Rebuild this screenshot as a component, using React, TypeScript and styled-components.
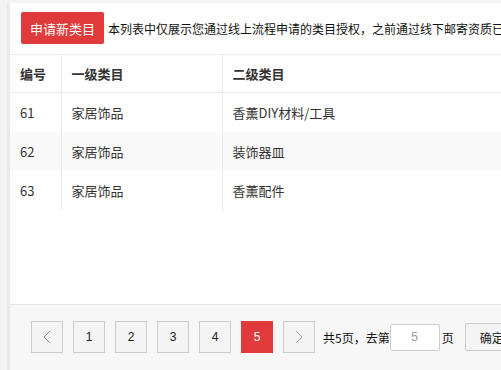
import React from 'react'
import styled, { createGlobalStyle } from 'styled-components';

const GlobalStyle = createGlobalStyle`
    html, body {
        margin: 0;
        padding: 0;
        overflow: hidden;
        background: #f3f3f3;
    }
    body {
        font-family: "Noto Sans CJK SC", "Noto Sans", sans-serif;
        color: #333;
    }
`;

const Page = styled.div`
    height: 370px;
    padding: 3px 0 0 7px;
    box-sizing: border-box;
`;

const Panel = styled.div`
    width: 760px;
    height: 100%;
    background: #fff;
    border-left: 3px solid #e9e9e9;
    display: flex;
    flex-direction: column;
`;

const Toolbar = styled.div`
    display: flex;
    align-items: center;
    gap: 4px;
    padding: 9px 11px 10px;
    border-bottom: 1px solid #ebebeb;
    white-space: nowrap;
`;

const PrimaryButton = styled.button`
    height: 32px;
    padding: 0 9px;
    border: none;
    border-radius: 2px;
    background: #e03a3a;
    color: #fff;
    font-family: inherit;
    font-size: 13px;
    cursor: pointer;
`;

const Notice = styled.span`
    font-size: 12px;
    color: #111;
`;

const Table = styled.table`
    border-collapse: collapse;
    table-layout: fixed;
    width: 750px;
    font-size: 13px;
`;

const Col = styled.col<{ $w?: number }>`
    width: ${({ $w }) => ($w ? `${$w}px` : 'auto')};
`;

const HeadCell = styled.th`
    height: 37px;
    padding: 0 10px;
    text-align: left;
    font-weight: 600;
    font-size: 13px;
    color: #333;
    border-bottom: 1px solid #ebebeb;
    border-right: 1px solid #ebebeb;
`;

const Row = styled.tr<{ $striped?: boolean }>`
    background: ${({ $striped }) => ($striped ? '#f9f9f9' : '#fff')};
    & + & td {
        border-top: 1px solid #ebebeb;
    }
`;

const Cell = styled.td`
    height: 39px;
    padding: 0 10px;
    color: #333;
    border-right: 1px solid #ebebeb;
`;

const Spacer = styled.div`
    flex: 1;
`;

const Footer = styled.div`
    height: 66px;
    box-sizing: border-box;
    background: #f7f7f7;
    border-top: 1px solid #e8e8e8;
    padding: 16px 0 0 21px;
    display: flex;
    align-items: flex-start;
    white-space: nowrap;
`;

const Pager = styled.div`
    display: flex;
    align-items: center;
    gap: 10px;
`;

const PageButton = styled.button<{ $active?: boolean }>`
    width: 32px;
    height: 32px;
    box-sizing: border-box;
    padding: 0;
    display: flex;
    align-items: center;
    justify-content: center;
    border: 1px solid ${({ $active }) => ($active ? '#e03a3a' : '#ccc')};
    background: ${({ $active }) => ($active ? '#e03a3a' : '#f4f4f4')};
    color: ${({ $active }) => ($active ? '#fff' : '#222')};
    font-family: "Liberation Sans", Arial, sans-serif;
    font-size: 12px;
`;

const Jump = styled.div`
    display: flex;
    align-items: center;
    height: 32px;
    margin-left: 8px;
    font-size: 12px;
    color: #111;
`;

const PageInput = styled.input`
    width: 50px;
    height: 27px;
    box-sizing: border-box;
    margin: 0 2px 0 0;
    border: 1px solid #ccc;
    border-radius: 2px;
    background: #fff;
    text-align: center;
    font-family: "Liberation Sans", Arial, sans-serif;
    font-size: 12px;
    color: #999;
    outline: none;
`;

const ConfirmButton = styled.button`
    height: 28px;
    margin-left: 11px;
    padding: 0 14px;
    border: 1px solid #ccc;
    border-radius: 2px;
    background: #f4f4f4;
    font-family: inherit;
    font-size: 12px;
    color: #222;
`;

function Chevron({ dir }: { dir: 'left' | 'right' }) {
    return (
        <svg width="8" height="14" viewBox="0 0 8 14" fill="none">
            <path
                d={dir === 'left' ? 'M7 1L1 7l6 6' : 'M1 1l6 6-6 6'}
                stroke={dir === 'left' ? '#8a8fb0' : '#aaa'}
                strokeWidth="1"
            />
        </svg>
    );
}

const rows = [
    { id: 61, first: '家居饰品', second: '香薰DIY材料/工具' },
    { id: 62, first: '家居饰品', second: '装饰器皿' },
    { id: 63, first: '家居饰品', second: '香薰配件' },
];

export default function App() {
    return (
        <Page>
            <GlobalStyle />
            <Panel>
                <Toolbar>
                    <PrimaryButton>申请新类目</PrimaryButton>
                    <Notice>本列表中仅展示您通过线上流程申请的类目授权，之前通过线下邮寄资质已获得的类目授权不在此展示</Notice>
                </Toolbar>

                <Table>
                    <colgroup>
                        <Col $w={51} />
                        <Col $w={161} />
                        <Col />
                    </colgroup>
                    <thead>
                        <tr>
                            <HeadCell>编号</HeadCell>
                            <HeadCell>一级类目</HeadCell>
                            <HeadCell>二级类目</HeadCell>
                        </tr>
                    </thead>
                    <tbody>
                        {rows.map((r, i) => (
                            <Row key={r.id} $striped={i % 2 === 1}>
                                <Cell>{r.id}</Cell>
                                <Cell>{r.first}</Cell>
                                <Cell>{r.second}</Cell>
                            </Row>
                        ))}
                    </tbody>
                </Table>

                <Spacer />

                <Footer>
                    <Pager>
                        <PageButton><Chevron dir="left" /></PageButton>
                        {[1, 2, 3, 4, 5].map(n => (
                            <PageButton key={n} $active={n === 5}>{n}</PageButton>
                        ))}
                        <PageButton><Chevron dir="right" /></PageButton>
                    </Pager>
                    <Jump>
                        共5页，去第
                        <PageInput defaultValue="5" />
                        页
                        <ConfirmButton>确定</ConfirmButton>
                    </Jump>
                </Footer>
            </Panel>
        </Page>
    )
}
